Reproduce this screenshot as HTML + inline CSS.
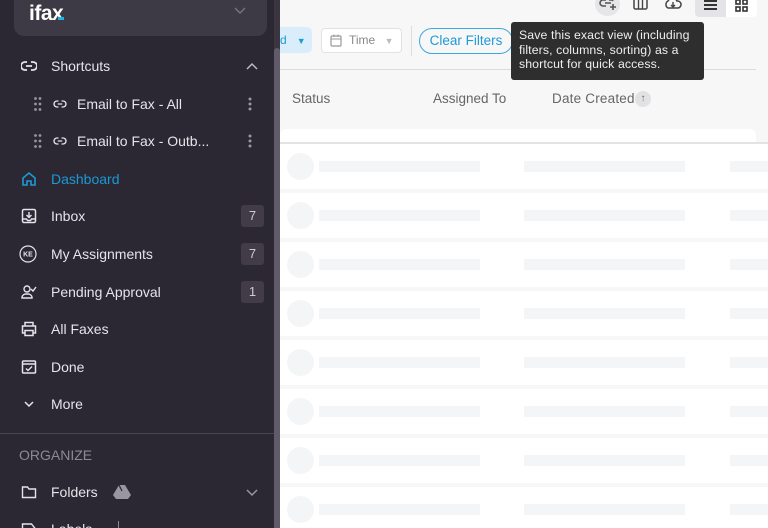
<!DOCTYPE html>
<html style="overflow:hidden;height:528px"><head><meta charset="utf-8"><style>
*{margin:0;padding:0;box-sizing:border-box}
body{width:768px;height:528px;overflow:hidden;font-family:"Liberation Sans",sans-serif;background:#f7f7f8;position:relative}
.sb{position:absolute;left:0;top:0;width:274px;height:528px;background:#2b2733;color:#e6e4ea;font-size:14px;overflow:hidden}
.track{position:absolute;left:274px;top:0;width:6px;height:528px;background:#3a3541}
.thumb{position:absolute;left:274px;top:48px;width:6px;height:480px;background:#615a6b;border-radius:3px 3px 0 0}
.card{position:absolute;left:14px;top:-10px;width:253px;height:46px;background:#3e3a45;border-radius:10px}
.logo{position:absolute;left:29px;top:2px;font-size:21px;font-weight:bold;color:#fff;letter-spacing:-0.5px}
.it{position:absolute;left:0;height:20px;display:flex;align-items:center;width:274px}
.it .ic{position:absolute;left:21px;width:16px;height:16px}
.it .tx{position:absolute;left:51px}
.badge{position:absolute;left:241px;width:23px;height:22px;background:#413c48;border-radius:3px;text-align:center;line-height:22px;color:#cfcbd4;font-size:13px}
.row{position:absolute;left:280px;width:488px;height:45px;background:#fff}
.circ{position:absolute;left:7px;top:9px;width:27px;height:27px;border-radius:50%;background:#f4f5f6}
.bar{position:absolute;top:17px;height:11px;background:#f4f5f6}
svg{display:block}
</style></head><body>
<div style="position:absolute;left:280px;top:27px;width:32px;height:26px;background:#d9eefa;border-radius:0 5px 5px 0;color:#1f9ad6;font-size:12px;line-height:26px">d&nbsp;&nbsp;&nbsp;<span style="font-size:9px">▼</span></div>
<div style="position:absolute;left:321px;top:28px;width:81px;height:25px;background:#fff;border:1px solid #e2e2e6;border-radius:4px;font-size:12px;color:#888;line-height:23px;padding-left:27px">Time <span style="font-size:9px;color:#bbb;margin-left:6px">▼</span>
<svg style="position:absolute;left:8px;top:5px" width="12" height="13" viewBox="0 0 12 13"><rect x="1" y="2" width="10" height="10" rx="1" fill="none" stroke="#999" stroke-width="1.2"/><line x1="1" y1="5" x2="11" y2="5" stroke="#999"/><line x1="4" y1="0.5" x2="4" y2="3" stroke="#999"/><line x1="8" y1="0.5" x2="8" y2="3" stroke="#999"/></svg></div>
<div style="position:absolute;left:411px;top:26px;width:1px;height:30px;background:#ddd"></div>
<div style="position:absolute;left:419px;top:28px;width:94px;height:26px;border:1.5px solid #3aa9e0;border-radius:13px;color:#1f9ad6;font-size:13.5px;line-height:23px;text-align:center">Clear Filters</div>
<div style="position:absolute;left:280px;top:69px;width:476px;height:1px;background:#dcdcde"></div>
<div style="position:absolute;left:595px;top:-8px;width:25px;height:24px;border-radius:50%;background:#e6e6e8"></div>
<svg style="position:absolute;left:599px;top:-2px" width="18" height="12" viewBox="0 0 18 12"><path d="M7 2H4a3 3 0 0 0 0 6h3M10 2h3a3 3 0 0 1 1 1M6 5h6M14 6v6M11 9h6" fill="none" stroke="#555" stroke-width="1.6"/></svg>
<svg style="position:absolute;left:633px;top:-2px" width="15" height="13" viewBox="0 0 15 13"><rect x="1" y="1" width="13" height="10" rx="1.5" fill="none" stroke="#444" stroke-width="1.5"/><line x1="5.5" y1="1" x2="5.5" y2="11" stroke="#444" stroke-width="1.4"/><line x1="9.5" y1="1" x2="9.5" y2="11" stroke="#444" stroke-width="1.4"/></svg>
<svg style="position:absolute;left:664px;top:-3px" width="18" height="14" viewBox="0 0 18 14"><path d="M4 11a4 4 0 0 1 0-7 5 5 0 0 1 9 0 3.5 3.5 0 0 1 1 7z" fill="none" stroke="#444" stroke-width="1.5"/><path d="M9 5v5M7 8l2 2 2-2" fill="none" stroke="#444" stroke-width="1.4"/></svg>
<div style="position:absolute;left:695px;top:-6px;width:62px;height:23px;background:#fff;border-radius:4px"></div>
<div style="position:absolute;left:695px;top:-6px;width:31px;height:23px;background:#e4e4e8;border-radius:4px 0 0 4px"></div>
<div style="position:absolute;left:704px;top:0;width:13px;height:10px;border-top:2px solid #333;border-bottom:2px solid #333"></div>
<div style="position:absolute;left:704px;top:4px;width:13px;height:2px;background:#333"></div>
<svg style="position:absolute;left:735px;top:-1px" width="13" height="13" viewBox="0 0 13 13"><g fill="none" stroke="#333" stroke-width="1.6"><rect x="1" y="1" width="4" height="4"/><rect x="8" y="1" width="4" height="4"/><rect x="1" y="8" width="4" height="4"/><rect x="8" y="8" width="4" height="4"/></g></svg>
<div style="position:absolute;left:511px;top:22px;width:193px;height:58px;background:#2e2e2e;border-radius:3px;color:#eee;font-size:12.3px;line-height:14.5px;padding:6px 8px;letter-spacing:0.1px">Save this exact view (including filters, columns, sorting) as a shortcut for quick access.</div>
<div style="position:absolute;left:292px;top:91px;font-size:13.5px;color:#666">Status</div>
<div style="position:absolute;left:433px;top:91px;font-size:13.5px;color:#666">Assigned To</div>
<div style="position:absolute;left:552px;top:91px;font-size:13.5px;color:#666;letter-spacing:0.2px">Date Created</div>
<div style="position:absolute;left:635px;top:91px;width:16px;height:16px;border-radius:50%;background:#e2e2e4;font-size:10px;text-align:center;line-height:16px;color:#666">↑</div>
<div style="position:absolute;left:280px;top:129px;width:476px;height:13px;background:#fff;border-radius:6px 6px 0 0"></div>
<div style="position:absolute;left:280px;top:142px;width:488px;height:2px;background:#e3e3e5"></div>
<div class="row" style="top:144px"><div class="circ"></div><div class="bar" style="left:39px;width:161px"></div><div class="bar" style="left:244px;width:161px"></div><div class="bar" style="left:450px;width:40px"></div></div>
<div class="row" style="top:193px"><div class="circ"></div><div class="bar" style="left:39px;width:161px"></div><div class="bar" style="left:244px;width:161px"></div><div class="bar" style="left:450px;width:40px"></div></div>
<div class="row" style="top:242px"><div class="circ"></div><div class="bar" style="left:39px;width:161px"></div><div class="bar" style="left:244px;width:161px"></div><div class="bar" style="left:450px;width:40px"></div></div>
<div class="row" style="top:291px"><div class="circ"></div><div class="bar" style="left:39px;width:161px"></div><div class="bar" style="left:244px;width:161px"></div><div class="bar" style="left:450px;width:40px"></div></div>
<div class="row" style="top:340px"><div class="circ"></div><div class="bar" style="left:39px;width:161px"></div><div class="bar" style="left:244px;width:161px"></div><div class="bar" style="left:450px;width:40px"></div></div>
<div class="row" style="top:389px"><div class="circ"></div><div class="bar" style="left:39px;width:161px"></div><div class="bar" style="left:244px;width:161px"></div><div class="bar" style="left:450px;width:40px"></div></div>
<div class="row" style="top:438px"><div class="circ"></div><div class="bar" style="left:39px;width:161px"></div><div class="bar" style="left:244px;width:161px"></div><div class="bar" style="left:450px;width:40px"></div></div>
<div class="row" style="top:487px;height:41px"><div class="circ"></div><div class="bar" style="left:39px;width:161px"></div><div class="bar" style="left:244px;width:161px"></div><div class="bar" style="left:450px;width:40px"></div></div>
<div class="sb">
<div class="card"></div>
<div class="logo">ifa<span style="position:relative">x<span style="position:absolute;left:6px;top:15px;width:6px;height:3px;background:#1fb5e8"></span></span></div>
<svg style="position:absolute;left:234px;top:7px" width="12" height="8" viewBox="0 0 12 8"><path d="M1 1l5 5 5-5" fill="none" stroke="#77727f" stroke-width="1.5"/></svg>
<div class="it" style="top:56px"><svg class="ic" viewBox="0 0 16 16"><path d="M6 4H4a4 4 0 0 0 0 8h2M10 4h2a4 4 0 0 1 0 8h-2M5 8h6" fill="none" stroke="#e6e4ea" stroke-width="1.8"/></svg><span class="tx">Shortcuts</span>
<svg style="position:absolute;left:246px;top:6px" width="12" height="8" viewBox="0 0 12 8"><path d="M1 7l5-5 5 5" fill="none" stroke="#bdb8c4" stroke-width="1.5"/></svg></div>
<div class="it" style="top:94px"><span style="position:absolute;left:34px;top:3px;font-size:0"><svg width="8" height="14" viewBox="0 0 8 14"><g fill="#9a95a2"><circle cx="1.5" cy="1.5" r="1.4"/><circle cx="6" cy="1.5" r="1.4"/><circle cx="1.5" cy="7" r="1.4"/><circle cx="6" cy="7" r="1.4"/><circle cx="1.5" cy="12.5" r="1.4"/><circle cx="6" cy="12.5" r="1.4"/></g></svg></span><svg style="position:absolute;left:53px;top:4px" width="14" height="12" viewBox="0 0 16 16"><path d="M6 4H4a4 4 0 0 0 0 8h2M10 4h2a4 4 0 0 1 0 8h-2M5 8h6" fill="none" stroke="#e6e4ea" stroke-width="1.8"/></svg><span style="position:absolute;left:77px">Email to Fax - All</span><svg style="position:absolute;left:248px;top:3px" width="4" height="14" viewBox="0 0 4 14"><g fill="#9a95a2"><circle cx="2" cy="2" r="1.5"/><circle cx="2" cy="7" r="1.5"/><circle cx="2" cy="12" r="1.5"/></g></svg></div>
<div class="it" style="top:131px"><span style="position:absolute;left:34px;top:3px;font-size:0"><svg width="8" height="14" viewBox="0 0 8 14"><g fill="#9a95a2"><circle cx="1.5" cy="1.5" r="1.4"/><circle cx="6" cy="1.5" r="1.4"/><circle cx="1.5" cy="7" r="1.4"/><circle cx="6" cy="7" r="1.4"/><circle cx="1.5" cy="12.5" r="1.4"/><circle cx="6" cy="12.5" r="1.4"/></g></svg></span><svg style="position:absolute;left:53px;top:4px" width="14" height="12" viewBox="0 0 16 16"><path d="M6 4H4a4 4 0 0 0 0 8h2M10 4h2a4 4 0 0 1 0 8h-2M5 8h6" fill="none" stroke="#e6e4ea" stroke-width="1.8"/></svg><span style="position:absolute;left:77px">Email to Fax - Outb...</span><svg style="position:absolute;left:248px;top:3px" width="4" height="14" viewBox="0 0 4 14"><g fill="#9a95a2"><circle cx="2" cy="2" r="1.5"/><circle cx="2" cy="7" r="1.5"/><circle cx="2" cy="12" r="1.5"/></g></svg></div>
<div class="it" style="top:169px;color:#1a9ad6"><svg class="ic" viewBox="0 0 16 16"><path d="M2 7l6-5 6 5v7H10v-4H6v4H2z" fill="none" stroke="#1a9ad6" stroke-width="1.6"/></svg><span class="tx">Dashboard</span></div>
<div class="it" style="top:206px"><svg class="ic" viewBox="0 0 16 16"><rect x="1.5" y="1.5" width="13" height="13" rx="1.5" fill="none" stroke="#e6e4ea" stroke-width="1.5"/><path d="M8 4v5M5.5 7L8 9.5 10.5 7M1.5 11h4l1 1.5h3l1-1.5h4" fill="none" stroke="#e6e4ea" stroke-width="1.4"/></svg><span class="tx">Inbox</span><div class="badge" style="top:-1px">7</div></div>
<div class="it" style="top:244px"><svg class="ic" style="left:19px;width:18px;height:18px" viewBox="0 0 18 18"><circle cx="9" cy="9" r="8" fill="none" stroke="#e6e4ea" stroke-width="1.2"/><text x="9" y="11.5" font-size="7" font-family="Liberation Sans" font-weight="bold" fill="#e6e4ea" text-anchor="middle">KE</text></svg><span class="tx">My Assignments</span><div class="badge" style="top:-1px">7</div></div>
<div class="it" style="top:282px"><svg class="ic" viewBox="0 0 16 16"><circle cx="6" cy="5" r="3" fill="none" stroke="#e6e4ea" stroke-width="1.4"/><path d="M1 14v-1a4 4 0 0 1 4-3h2a4 4 0 0 1 4 3v1zM10 5l2 2 3-4" fill="none" stroke="#e6e4ea" stroke-width="1.4"/></svg><span class="tx">Pending Approval</span><div class="badge" style="top:-1px">1</div></div>
<div class="it" style="top:319px"><svg class="ic" viewBox="0 0 16 16"><path d="M4 5V1.5h8V5M4 12H1.5V5h13v7H12M4 9.5h8v5H4z" fill="none" stroke="#e6e4ea" stroke-width="1.5"/></svg><span class="tx">All Faxes</span></div>
<div class="it" style="top:357px"><svg class="ic" viewBox="0 0 16 16"><rect x="1.5" y="2" width="13" height="12" rx="1" fill="none" stroke="#e6e4ea" stroke-width="1.5"/><path d="M1.5 5h13M5 9.5l2 2 4-4" fill="none" stroke="#e6e4ea" stroke-width="1.4"/></svg><span class="tx">Done</span></div>
<div class="it" style="top:394px"><svg style="position:absolute;left:24px;top:7px" width="10" height="6" viewBox="0 0 10 6"><path d="M1 1l4 4 4-4" fill="none" stroke="#e6e4ea" stroke-width="1.5"/></svg><span class="tx">More</span></div>
<div style="position:absolute;left:0;top:433px;width:274px;height:1px;background:#4a4552"></div>
<div style="position:absolute;left:19px;top:447px;color:#8d8895;font-size:14px">ORGANIZE</div>
<div class="it" style="top:482px"><svg class="ic" viewBox="0 0 16 16"><path d="M1.5 3h5l1.5 2h6.5v8.5h-13z" fill="none" stroke="#e6e4ea" stroke-width="1.4"/></svg><span class="tx">Folders</span><svg style="position:absolute;left:113px;top:2px" width="18" height="15" viewBox="0 0 18 15"><path d="M6 1h6l6 10-3 4H3l-3-4z" fill="#9a95a2"/><path d="M6 1l3 6" stroke="#2b2733" stroke-width="1.2"/></svg><svg style="position:absolute;left:246px;top:7px" width="12" height="8" viewBox="0 0 12 8"><path d="M1 1l5 5 5-5" fill="none" stroke="#9a95a2" stroke-width="1.5"/></svg></div>
<div class="it" style="top:519px"><svg class="ic" viewBox="0 0 16 16"><path d="M1.5 3h9l4 5-4 5h-9z" fill="none" stroke="#e6e4ea" stroke-width="1.4"/></svg><span class="tx">Labels</span><span style="position:absolute;left:118px;top:2px;width:1px;height:14px;background:#8d8895"></span></div>
</div>
<div class="track"></div><div class="thumb"></div>
</body></html>
